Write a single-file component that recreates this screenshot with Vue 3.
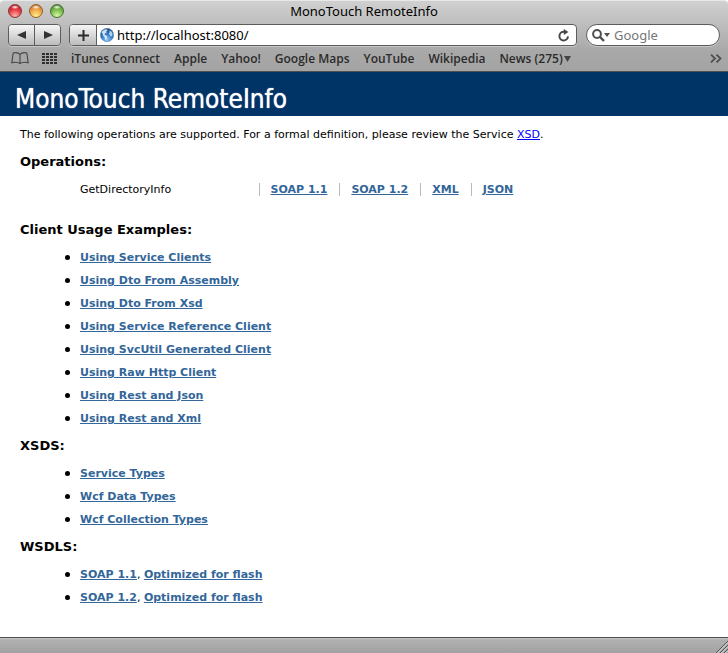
<script setup>
import { ref } from 'vue'

const address = ref('http://localhost:8080/')
const query = ref('')
const lights = ['red', 'amber', 'green']
const bookmarks = ['iTunes Connect', 'Apple', 'Yahoo!', 'Google Maps', 'YouTube', 'Wikipedia']
const formats = ['SOAP 1.1', 'SOAP 1.2', 'XML', 'JSON']
const sections = [
  {
    title: 'Client Usage Examples:',
    items: [
      ['Using Service Clients'],
      ['Using Dto From Assembly'],
      ['Using Dto From Xsd'],
      ['Using Service Reference Client'],
      ['Using SvcUtil Generated Client'],
      ['Using Raw Http Client'],
      ['Using Rest and Json'],
      ['Using Rest and Xml'],
    ],
  },
  { title: 'XSDS:', items: [['Service Types'], ['Wcf Data Types'], ['Wcf Collection Types']] },
  {
    title: 'WSDLS:',
    items: [
      ['SOAP 1.1', 'Optimized for flash'],
      ['SOAP 1.2', 'Optimized for flash'],
    ],
  },
]
const gridRows = [0, 3, 6, 9]
const gridCols = [0, 4, 8, 12]
</script>

<template>
  <div class="window">
    <header class="chrome">
      <div class="titlebar">
        <div class="lights">
          <button v-for="l in lights" :key="l" type="button" class="light" :class="l" :aria-label="l + ' window button'"></button>
        </div>
        <div class="window-title">MonoTouch RemoteInfo</div>
      </div>

      <div class="toolbar">
        <div class="nav">
          <button type="button" aria-label="Back">
            <svg width="10" height="8" viewBox="0 0 10 8"><path d="M0 4L9 0V8Z" fill="#333" /></svg>
          </button>
          <button type="button" aria-label="Forward">
            <svg width="10" height="8" viewBox="0 0 10 8"><path d="M10 4L1 0V8Z" fill="#333" /></svg>
          </button>
        </div>
        <div class="address">
          <button type="button" class="add" aria-label="Add bookmark">
            <svg width="11" height="11" viewBox="0 0 11 11"><path d="M5.5 0V11M0 5.5H11" stroke="#2b2b2b" stroke-width="2" /></svg>
          </button>
          <svg class="globe" width="14" height="14" viewBox="0 0 14 14">
            <defs>
              <radialGradient id="sea" cx="50%" cy="85%" r="85%">
                <stop offset="0" stop-color="#8cc8f5" />
                <stop offset=".5" stop-color="#3478c4" />
                <stop offset="1" stop-color="#16457f" />
              </radialGradient>
            </defs>
            <circle cx="7" cy="7" r="6.7" fill="url(#sea)" stroke="#5f86b5" stroke-width=".5" />
            <path d="M1.5 4.5C2.5 2.3 4.5 1 6.5 1.2L7.6 2.5 6.2 3.4 6.8 4.6 5 5.4 4.6 6.8 6.4 7.4 7.4 9 6.2 12 5.4 12.4 4.6 9.3 3 7.6 2.6 5.8Z" fill="#dceefa" opacity=".9" />
            <path d="M9.4 2.4L11.4 3.4 12.6 5.6 12.2 8 10.8 8.6 9.6 6.8 8.6 5.8 9.6 4.4Z" fill="#c5e2f6" opacity=".85" />
          </svg>
          <input v-model="address" type="text" aria-label="Address" />
          <button type="button" class="reload" aria-label="Reload">
            <svg width="12" height="13" viewBox="0 0 12 13">
              <path d="M7 2.8H5.8A4.3 4.3 0 1 0 10 7.4" fill="none" stroke="#484848" stroke-width="2" />
              <path d="M5.8 0L10.4 2.9 5.8 6Z" fill="#484848" />
            </svg>
          </button>
        </div>
        <div class="search">
          <svg width="18" height="13" viewBox="0 0 18 13">
            <circle cx="5" cy="5" r="3.9" fill="none" stroke="#505050" stroke-width="2" />
            <path d="M7.7 7.7L12 12" stroke="#505050" stroke-width="2.4" />
            <path d="M12 4H18L15 8Z" fill="#505050" />
          </svg>
          <input v-model="query" type="search" placeholder="Google" aria-label="Search Google" />
        </div>
      </div>

      <nav class="bookmarks">
        <button type="button" class="book" aria-label="Show all bookmarks">
          <svg width="18" height="13" viewBox="0 0 18 13" fill="none" stroke="#444" stroke-width="1.1">
            <path d="M9 2.4C7.5.8 4.5.3 2.2 1L.8 10.8C3.6 10 7 10 9 11.6 11 10 14.4 10 17.2 10.8L15.8 1C13.5.3 10.5.8 9 2.4ZM9 2.4V12" />
          </svg>
        </button>
        <button type="button" class="top-sites" aria-label="Top sites">
          <svg width="15" height="11" viewBox="0 0 15 11" fill="#2f2f2f">
            <template v-for="y in gridRows" :key="y">
              <rect v-for="x in gridCols" :key="x" :x="x" :y="y" width="3" height="2" />
            </template>
          </svg>
        </button>
        <a v-for="b in bookmarks" :key="b" href="#">{{ b }}</a>
        <button type="button" class="news">
          News (275)
          <svg width="7" height="6" viewBox="0 0 7 6"><path d="M0 0H7L3.5 6Z" fill="#444" /></svg>
        </button>
        <button type="button" class="more" aria-label="More bookmarks">
          <svg width="12" height="9" viewBox="0 0 12 9" fill="none" stroke="#505050" stroke-width="1.8">
            <path d="M1 .6L5 4.5 1 8.4M6.5 .6L10.5 4.5 6.5 8.4" />
          </svg>
        </button>
      </nav>
    </header>

    <main class="page">
      <h1>MonoTouch RemoteInfo</h1>
      <div class="content">
        <p>
          The following operations are supported. For a formal definition, please review the Service
          <a href="#">XSD</a>.
        </p>

        <h2>Operations:</h2>
        <table>
          <tbody>
            <tr>
              <th scope="row">GetDirectoryInfo</th>
              <td v-for="f in formats" :key="f"><a href="#">{{ f }}</a></td>
            </tr>
          </tbody>
        </table>

        <section v-for="s in sections" :key="s.title">
          <h2>{{ s.title }}</h2>
          <ul>
            <li v-for="item in s.items" :key="item[0]">
              <template v-for="(link, i) in item" :key="link"><template v-if="i">, </template><a href="#">{{ link }}</a></template>
            </li>
          </ul>
        </section>
      </div>
    </main>

    <footer class="statusbar">
      <svg width="12" height="12" viewBox="0 0 12 12">
        <path d="M0 12L12 0M4 12L12 4M8 12L12 8" stroke="#505050" />
        <path d="M1.4 12L12 1.4M5.4 12L12 5.4M9.4 12L12 9.4" stroke="#ddd" />
      </svg>
    </footer>
  </div>
</template>

<style>
body {
  margin: 0;
  background: #fff;
}
</style>

<style scoped>
* {
  box-sizing: border-box;
}

.window {
  display: flex;
  flex-direction: column;
  min-height: 100vh;
  font-family: "DejaVu Sans", Verdana, sans-serif;
  color: #000;
}

button {
  display: flex;
  align-items: center;
  justify-content: center;
  margin: 0;
  padding: 0;
  border: 0;
  background: none;
  font: inherit;
  color: inherit;
}

input {
  flex: 1;
  min-width: 0;
  padding: 0;
  border: 0;
  outline: 0;
  background: none;
  font-family: "Noto Sans", "Open Sans", sans-serif;
  font-size: 13px;
  color: #000;
}

.chrome {
  flex: none;
  height: 72px;
  border-top: 1px solid #e8e8e8;
  border-bottom: 1px solid #505050;
  border-radius: 4px 4px 0 0;
  background: linear-gradient(#d0d0d0, #a8a8a8 72%, #a4a4a4);
  font-family: "Noto Sans", "Open Sans", sans-serif;
}

.titlebar {
  display: grid;
  grid-template-columns: 1fr auto 1fr;
  align-items: center;
  height: 23px;
  padding: 0 8px;
}

.lights {
  display: flex;
  gap: 7px;
  padding-bottom: 3px;
}

.light {
  width: 14px;
  height: 14px;
  border: 1px solid;
  border-radius: 50%;
}

.red {
  border-color: #8a3535;
  background: radial-gradient(ellipse 4px 2px at 50% 18%, #fff, transparent), radial-gradient(circle at 50% 90%, #ffb3a8, #e4363f 55%, #9b2026);
}

.amber {
  border-color: #94612c;
  background: radial-gradient(ellipse 4px 2px at 50% 18%, #fff, transparent), radial-gradient(circle at 50% 90%, #fff08c, #efa045 55%, #a96321);
}

.green {
  border-color: #47702f;
  background: radial-gradient(ellipse 4px 2px at 50% 18%, #fff, transparent), radial-gradient(circle at 50% 90%, #d5fba0, #78b84c 55%, #40752a);
}

.window-title {
  padding-bottom: 3px;
  font-size: 13px;
  line-height: 20px;
}

.toolbar {
  display: flex;
  gap: 8px;
  height: 22px;
  padding: 0 8px;
}

.nav,
.address {
  display: flex;
  border: 1px solid #5c5c5c;
  border-radius: 4px;
  box-shadow: 0 1px #c8c8c8;
  overflow: hidden;
}

.nav {
  width: 53px;
}

.nav button {
  flex: 1;
  background: linear-gradient(#f6f6f6, #bcbcbc);
}

.nav button + button {
  border-left: 1px solid #5c5c5c;
}

.address {
  flex: 1;
  align-items: center;
  background: #fff;
}

.add {
  width: 27px;
  height: 20px;
  border-right: 1px solid #5c5c5c;
  background: linear-gradient(#f6f6f6, #bcbcbc);
}

.globe {
  margin: 0 3px;
}

.reload {
  width: 24px;
}

.search {
  display: flex;
  align-items: center;
  gap: 4px;
  width: 134px;
  margin-left: 1px;
  padding: 0 8px 0 5px;
  border: 1px solid #5c5c5c;
  border-radius: 11px;
  background: #fff;
  box-shadow: 0 1px #c8c8c8;
}

.search input::placeholder {
  color: #777;
  opacity: 1;
}

.bookmarks {
  display: flex;
  align-items: center;
  gap: 14px;
  height: 25px;
  padding: 0 6px 0 11px;
  font-family: "Open Sans", "Noto Sans", sans-serif;
  font-size: 12px;
  font-weight: 600;
  color: #2b2b2b;
  white-space: nowrap;
}

.bookmarks a {
  color: inherit;
  text-decoration: none;
}

.book {
  margin-right: -1px;
}

.news {
  gap: 1px;
}

.more {
  margin-left: auto;
}

.page {
  flex: 1;
}

h1 {
  margin: 0;
  padding: 7px 15px 0;
  height: 44px;
  background: #036;
  color: #fff;
  font-family: "DejaVu Sans Condensed", "DejaVu Sans", Tahoma, sans-serif;
  font-size: 26px;
  font-weight: 400;
  line-height: 40px;
  text-shadow: 0 0 1px #fff;
}

.content {
  padding: 9px 20px 20px;
  font-size: 11px;
}

p {
  margin: 0 0 7px;
  line-height: 20px;
}

p a {
  color: #00f;
}

h2 {
  margin: 0;
  font-size: 13px;
  font-weight: 700;
  line-height: 20px;
}

table {
  margin: 11px 0 24px 60px;
  border-collapse: collapse;
}

th {
  width: 179px;
  padding: 0;
  font-weight: 400;
  line-height: 13px;
  text-align: left;
}

td {
  padding: 0 12px 0 11px;
  border-left: 1px solid #bbb;
  line-height: 13px;
}

td a,
li a {
  color: #369;
  font-weight: 700;
}

ul {
  margin: 6px 0;
  padding-left: 60px;
  list-style: none;
}

li {
  line-height: 23px;
}

li::before {
  content: "";
  display: inline-block;
  width: 5px;
  height: 5px;
  margin: 0 10px 0 -15px;
  border-radius: 50%;
  background: #000;
  vertical-align: 1px;
}

.statusbar {
  display: flex;
  flex: none;
  align-items: flex-end;
  justify-content: flex-end;
  height: 16px;
  border-top: 1px solid #505050;
  background: linear-gradient(#c8c8c8, #b0b0b0 2px, #a2a2a2);
}
</style>
